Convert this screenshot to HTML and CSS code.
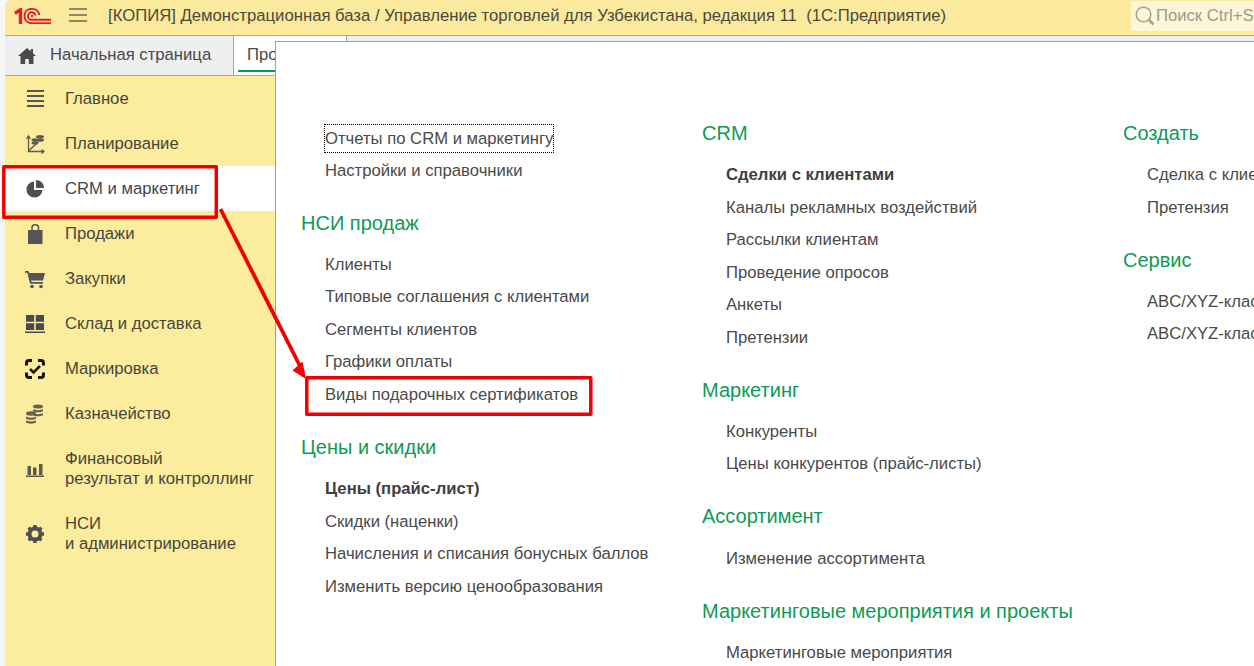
FILE: index.html
```html
<!DOCTYPE html>
<html lang="ru">
<head>
<meta charset="utf-8">
<title>1С:Предприятие</title>
<link rel="stylesheet" href="styles.css">
</head>
<body>
<div class="app">
  <header class="topbar">
    <svg class="logo" viewBox="0 0 37 16" aria-label="1С">
      <g fill="none" stroke="#e0202a">
        <path stroke-width="3.400" d="M.8 5.200 6.500 1.800V16"/>
        <path stroke-width="1.900" d="M25.500 7C24.500 3 21 .9 17.500 .9 13 .9 10.500 4 10.500 8s2.500 7.100 7 7.100H37"/>
        <path stroke-width="1.900" d="M21.500 7.500C20.800 5.200 19.300 4.200 17.500 4.200 15.300 4.200 14 5.800 14 8s1.300 3.800 3.500 3.800H37"/>
      </g>
      <circle cx="18" cy="8" r="1.200" fill="#e0202a"/>
    </svg>
    <svg class="burger" viewBox="0 0 18 14"><path d="M0 1h18M0 7h18M0 13h18" stroke="#6d6a4c" stroke-width="1.500"/></svg>
    <div class="title">[КОПИЯ] Демонстрационная база / Управление торговлей для Узбекистана, редакция 11&nbsp; (1С:Предприятие)</div>
    <div class="search">
      <svg class="search-icon" viewBox="0 0 20 20"><circle cx="8.500" cy="8.500" r="7.300" fill="none" stroke="#a5a38d" stroke-width="1.500"/><path d="M14 14l4.500 4.500" stroke="#a5a38d" stroke-width="2.500"/></svg>
      <span class="search-text">Поиск Ctrl+Shift+F</span>
    </div>
  </header>

  <nav class="tabs">
    <div class="tab tab-home">
      <svg class="home-icon" viewBox="0 0 18 16"><path fill="#4a4a4a" d="M9 0 0 8h2.500v8h4.700v-5h3.600v5h4.700V8H18l-3-2.700V1h-2.300v2.200z"/></svg>
      <span>Начальная страница</span>
    </div>
    <div class="tab tab-open"><span class="tab-label">Продажи</span></div>
  </nav>

  <div class="main">
    <aside class="rail">
      <a class="rail-item">
        <svg class="ico" viewBox="0 0 20 20"><path d="M2 4h17M2 9h17M2 14h17M2 19h17" transform="translate(0 -2)" stroke="#555" stroke-width="2"/></svg>
        <span>Главное</span>
      </a>
      <a class="rail-item">
        <svg class="ico" viewBox="0 0 20 20"><g fill="none" stroke="#5a5a50" stroke-width="1.300"><path d="M3.500 3v14.500H19"/><path d="M1.500 5l2-3 2 3M16.500 15.500l2.500 2-2.500 2"/><path d="M3.500 17 12 9"/></g><ellipse cx="15" cy="2.800" rx="4" ry="1.800" fill="#5a5a50"/><ellipse cx="15" cy="6" rx="4" ry="1.800" fill="#5a5a50"/><ellipse cx="10" cy="6" rx="3.500" ry="1.700" fill="#5a5a50"/><ellipse cx="10" cy="9" rx="3.500" ry="1.700" fill="#5a5a50"/></svg>
        <span>Планирование</span>
      </a>
      <a class="rail-item rail-active">
        <svg class="ico" viewBox="0 0 20 20"><path fill="#4f4f4f" d="M9 2.500a8 8 0 1 0 8.500 8.500H9z"/><path fill="#4f4f4f" d="M11 1a8 8 0 0 1 8 8h-8z"/></svg>
        <span>CRM и маркетинг</span>
      </a>
      <a class="rail-item">
        <svg class="ico" viewBox="0 0 20 20"><path fill="#555" d="M3 6h14.500v14H3z"/><path fill="none" stroke="#555" stroke-width="1.500" d="M7 9V3.500C7 1.500 8.500.8 10.250.8S13.500 1.500 13.500 3.500V9"/></svg>
        <span>Продажи</span>
      </a>
      <a class="rail-item">
        <svg class="ico" viewBox="0 0 20 20"><path fill="#555" d="M0 2h3.500l.7 2H20l-2 7.500H6.200l.4 1.500H18v1.800H5L2.300 3.800H0z"/><circle cx="7" cy="17.500" r="1.800" fill="#555"/><circle cx="16" cy="17.500" r="1.800" fill="#555"/></svg>
        <span>Закупки</span>
      </a>
      <a class="rail-item">
        <svg class="ico" viewBox="0 0 20 20"><path fill="#4a4a4a" d="M1 1h8.200v6.800H1zM10.800 1H19v6.800h-8.200zM1 9.200h8.200V16H1zM10.800 9.200H19V16h-8.200zM0 17.500h20V19H0z"/></svg>
        <span>Склад и доставка</span>
      </a>
      <a class="rail-item">
        <svg class="ico" viewBox="0 0 20 20"><g fill="none" stroke="#151515" stroke-width="3"><path d="M1.500 6.500V4Q1.500 1.500 4 1.500H7M13 1.500h3Q18.500 1.500 18.500 4V6.500M18.500 13.500V16Q18.500 18.500 16 18.500H13M7 18.500H4Q1.500 18.500 1.500 16V13.500"/><path stroke-width="2.600" d="M5 10l3.500 3.500L15 7"/></g></svg>
        <span>Маркировка</span>
      </a>
      <a class="rail-item">
        <svg class="ico" viewBox="0 0 20 20"><g fill="#626254"><ellipse cx="13" cy="2.500" rx="5" ry="2"/><path d="M8 5c1 1.500 9 1.500 10 0v2c-1 1.800-9 1.800-10 0zM8 9c1 1.500 9 1.500 10 0v2c-1 1.800-9 1.800-10 0z"/><ellipse cx="6" cy="9.500" rx="5" ry="2.200"/><path d="M1 12.500c1 1.500 9 1.500 10 0v2c-1 1.800-9 1.800-10 0zM1 16.300c1 1.500 9 1.500 10 0v2c-1 1.800-9 1.800-10 0z"/></g></svg>
        <span>Казначейство</span>
      </a>
      <a class="rail-item rail-tall">
        <svg class="ico" viewBox="0 0 20 20"><path fill="#5a5a4c" d="M2.500 7h3.500v9H2.500zM8 8.500h3.500V16H8zM14 5h3.500v11H14zM1 16.500h18V18H1z"/></svg>
        <span>Финансовый<br>результат и контроллинг</span>
      </a>
      <a class="rail-item rail-tall">
        <svg class="ico" viewBox="0 0 20 20"><circle cx="10" cy="10" r="5.500" fill="none" stroke="#4f4f4f" stroke-width="4"/><path stroke="#4f4f4f" stroke-width="3.400" d="M10 1v3M10 16v3M1 10h3M16 10h3M3.600 3.600l2.200 2.200M14.200 14.200l2.200 2.200M3.600 16.400l2.200-2.200M14.200 5.800l2.200-2.200"/></svg>
        <span>НСИ<br>и администрирование</span>
      </a>
    </aside>
  </div>

  <section class="panel">
    <div class="col">
      <ul class="links">
        <li class="focus-row"><span class="focused">Отчеты по CRM и маркетингу</span></li>
        <li>Настройки и справочники</li>
      </ul>
      <div class="group">
        <h2>НСИ продаж</h2>
        <ul class="links">
          <li>Клиенты</li>
          <li>Типовые соглашения с клиентами</li>
          <li>Сегменты клиентов</li>
          <li>Графики оплаты</li>
          <li>Виды подарочных сертификатов</li>
        </ul>
      </div>
      <div class="group">
        <h2>Цены и скидки</h2>
        <ul class="links">
          <li class="strong">Цены (прайс-лист)</li>
          <li>Скидки (наценки)</li>
          <li>Начисления и списания бонусных баллов</li>
          <li>Изменить версию ценообразования</li>
        </ul>
      </div>
    </div>
    <div class="col">
      <div class="group">
        <h2>CRM</h2>
        <ul class="links">
          <li class="strong">Сделки с клиентами</li>
          <li>Каналы рекламных воздействий</li>
          <li>Рассылки клиентам</li>
          <li>Проведение опросов</li>
          <li>Анкеты</li>
          <li>Претензии</li>
        </ul>
      </div>
      <div class="group">
        <h2>Маркетинг</h2>
        <ul class="links">
          <li>Конкуренты</li>
          <li>Цены конкурентов (прайс-листы)</li>
        </ul>
      </div>
      <div class="group">
        <h2>Ассортимент</h2>
        <ul class="links">
          <li>Изменение ассортимента</li>
        </ul>
      </div>
      <div class="group">
        <h2>Маркетинговые мероприятия и проекты</h2>
        <ul class="links">
          <li>Маркетинговые мероприятия</li>
        </ul>
      </div>
    </div>
    <div class="col">
      <div class="group">
        <h2>Создать</h2>
        <ul class="links">
          <li>Сделка с клиентом</li>
          <li>Претензия</li>
        </ul>
      </div>
      <div class="group">
        <h2>Сервис</h2>
        <ul class="links">
          <li>ABC/XYZ-классификация</li>
          <li>ABC/XYZ-классификация</li>
        </ul>
      </div>
    </div>
  </section>

  <svg class="annotation" viewBox="0 0 1254 666">
    <g fill="none" stroke="#f00000" stroke-width="3.500" stroke-linejoin="round">
      <rect x="3.800" y="166.800" width="212.500" height="50.500"/>
      <rect x="306.800" y="377.800" width="284" height="36.500"/>
      <path stroke-width="3.800" d="M220.500 209 303 372"/>
    </g>
    <path fill="#f00000" d="M306 379 292.500 370.500 302.500 361.500z"/>
  </svg>
</div>
</body>
</html>
```
FILE: styles.css
```css
* { box-sizing: border-box; }
html, body { margin: 0; padding: 0; height: 100%; overflow: hidden; }
body {
  font-family: "Liberation Sans", Arial, sans-serif;
  font-size: 16.67px;
  color: #4a4a4a;
  background: #f6f6f6;
}
.app {
  position: relative;
  width: 1254px;
  height: 666px;
  padding-left: 5px;
  overflow: hidden;
  display: flex;
  flex-direction: column;
}
.topbar {
  flex: none;
  height: 36px;
  background: #fbe99e;
  border-bottom: 1px solid #b8ac6c;
  border-top-left-radius: 6px;
  display: flex;
  align-items: flex-start;
  white-space: nowrap;
  overflow: hidden;
}
.logo { flex: none; width: 37px; height: 16px; margin: 8px 0 0 9px; }
.burger { flex: none; width: 18px; height: 14px; margin: 8px 0 0 18px; }
.title { flex: none; width: 1023px; margin-left: 21px; line-height: 31px; font-size: 16.7px; color: #4a4a3c; }
.search {
  flex: none;
  width: 130px;
  height: 30px;
  margin-top: 1px;
  padding-left: 4px;
  background: #fdf6d8;
  border-radius: 3px;
  display: flex;
  align-items: center;
  gap: 1px;
}
.search-icon { flex: none; width: 20px; height: 20px; }
.search-text { color: #9a9a8c; }

.tabs {
  flex: none;
  height: 40px;
  background: #efefef;
  border-bottom: 1px solid #a8a8a8;
  display: flex;
}
.tab { flex: none; height: 39px; padding-bottom: 2px; border-right: 1px solid #a8a8a8; display: flex; align-items: center; }
.tab-home { width: 229px; padding-left: 13px; gap: 14px; color: #4a4a4a; }
.home-icon { width: 18px; height: 16px; margin-top: 3px; }
.tab-open { width: 113px; background: #fff; padding-left: 13px; position: relative; overflow: hidden; }
.tab-open::after {
  content: "";
  position: absolute;
  left: 4px;
  right: 4px;
  bottom: 3px;
  height: 2px;
  background: #0b9b4d;
}

.main { flex: 1; min-height: 0; display: flex; }
.rail { flex: none; width: 270px; background: #fbec9e; }
.rail-item {
  display: flex;
  align-items: center;
  gap: 20px;
  height: 45px;
  padding-left: 20px;
  line-height: 20px;
  color: #46463c;
}
.rail-tall { height: 65px; }
.rail-active { background: #fff; color: #46464a; }
.ico { flex: none; width: 20px; height: 20px; }

.panel {
  position: absolute;
  left: 275px;
  top: 41px;
  width: 979px;
  height: 625px;
  background: #fff;
  border-top: 1px solid #a0a0a0;
  border-left: 1px solid #a8a276;
  padding: 79px 0 0 25px;
  display: grid;
  grid-template-columns: 401px 421px 1fr;
  overflow: hidden;
  white-space: nowrap;
}
.group { margin-top: 24.9px; }
.col > .group:first-child { margin-top: 0; }
h2 {
  margin: 0 0 12.85px;
  font-size: 20px;
  font-weight: 400;
  line-height: 24px;
  color: #0f9a55;
}
.links { list-style: none; margin: 0; padding: 0 0 0 24px; }
.links li { height: 32.5px; padding-top: 0.25px; line-height: 34.5px; color: #4a4a4a; }
.links .strong { font-weight: 700; color: #404040; }
.links .focus-row { line-height: 32.5px; padding-top: 2px; }
.focused { display: inline-block; line-height: 27px; outline: 1px dotted #000; }

.annotation { position: absolute; left: 0; top: 0; width: 1254px; height: 666px; pointer-events: none; }
```
